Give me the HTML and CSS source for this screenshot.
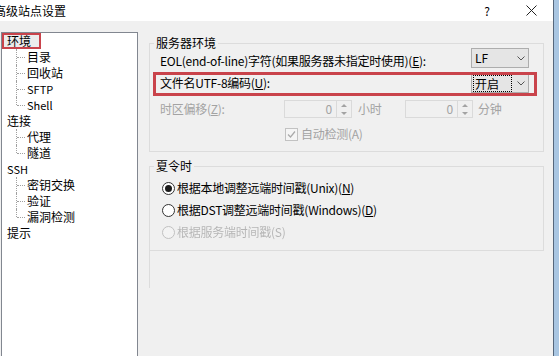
FILE: index.html
```html
<!DOCTYPE html>
<html lang="zh-CN">

<head>
    <meta charset="UTF-8">
    <title>高级站点设置</title>
    <link rel="stylesheet" href="styles.css">
</head>

<body>
    <div class="screen">
        <div class="dialog">
            <div class="titlebar">
                <span class="title">高级站点设置</span>
                <span class="help">?</span>
                <svg class="close" width="11" height="11" viewBox="0 0 11 11">
                    <path d="M0.5 0.5 L10.5 10.5 M10.5 0.5 L0.5 10.5" stroke="#222" stroke-width="1" fill="none" />
                </svg>
            </div>
            <div class="main">
                <ul class="tree">
                    <li>
                        <div class="node selected"><span class="mark">环境</span></div>
                        <ul class="sub">
                            <li>目录</li>
                            <li>回收站</li>
                            <li class="latin">SFTP</li>
                            <li class="latin">Shell</li>
                        </ul>
                    </li>
                    <li>
                        <div class="node">连接</div>
                        <ul class="sub">
                            <li>代理</li>
                            <li>隧道</li>
                        </ul>
                    </li>
                    <li>
                        <div class="node latin">SSH</div>
                        <ul class="sub">
                            <li>密钥交换</li>
                            <li>验证</li>
                            <li>漏洞检测</li>
                        </ul>
                    </li>
                    <li>
                        <div class="node">提示</div>
                    </li>
                </ul>
                <div class="pane">
                    <fieldset class="group">
                        <legend>服务器环境</legend>
                        <div class="group-body">
                            <div class="row row-eol">
                                <span class="label">EOL(end-of-line)字符(如果服务器未指定时使用)(<u>E</u>):</span>
                                <div class="combo">
                                    <span class="val">LF</span>
                                    <svg class="arrow" width="8" height="5" viewBox="0 0 8 5">
                                        <path d="M0.5 0.5 L4 4 L7.5 0.5" stroke="#555" fill="none" />
                                    </svg>
                                </div>
                            </div>
                            <div class="row row-utf">
                                <span class="label">文件名UTF-8编码(<u>U</u>):</span>
                                <div class="combo">
                                    <span class="val focus">开启</span>
                                    <svg class="arrow" width="8" height="5" viewBox="0 0 8 5">
                                        <path d="M0.5 0.5 L4 4 L7.5 0.5" stroke="#555" fill="none" />
                                    </svg>
                                </div>
                                <div class="redbox"></div>
                            </div>
                            <div class="row row-tz">
                                <span class="label off tz-label">时区偏移(<u>Z</u>):</span>
                                <div class="spin">
                                    <span class="spin-val">0</span>
                                    <span class="spin-btns"><i class="up"></i><i class="down"></i></span>
                                </div>
                                <span class="off unit-h">小时</span>
                                <div class="spin">
                                    <span class="spin-val">0</span>
                                    <span class="spin-btns"><i class="up"></i><i class="down"></i></span>
                                </div>
                                <span class="off unit-m">分钟</span>
                            </div>
                            <div class="row row-auto">
                                <span class="check">
                                    <svg width="11" height="11" viewBox="0 0 11 11">
                                        <path d="M2 5.5 L4.5 8 L9 2.5" stroke="#a9a9a9" stroke-width="1.2" fill="none" />
                                    </svg>
                                </span>
                                <span class="off">自动检测(A)</span>
                            </div>
                        </div>
                    </fieldset>
                    <fieldset class="group group-dst">
                        <legend>夏令时</legend>
                        <div class="group-body">
                            <div class="row radio-row">
                                <span class="radio on"></span>
                                <span>根据本地调整远端时间戳(Unix)(<u>N</u>)</span>
                            </div>
                            <div class="row radio-row">
                                <span class="radio"></span>
                                <span>根据DST调整远端时间戳(Windows)(<u>D</u>)</span>
                            </div>
                            <div class="row radio-row smudge">
                                <span class="radio"></span>
                                <span>根据服务端时间戳(S)</span>
                            </div>
                        </div>
                    </fieldset>
                    <div class="trail"></div>
                </div>
            </div>
        </div>
        <div class="edge"></div>
    </div>
</body>

</html>
```

FILE: styles.css
```css
* {
    margin: 0;
    padding: 0;
    box-sizing: border-box;
}

ul {
    list-style: none;
}

body {
    font-family: "Noto Sans CJK SC", "Liberation Sans", sans-serif;
    font-size: 12px;
    line-height: 16px;
    color: #000;
    background: #f0f0f0;
}

.screen {
    width: 559px;
    height: 356px;
    display: flex;
    overflow: hidden;
}

.dialog {
    width: 553px;
    display: flex;
    flex-direction: column;
    background: #f0f0f0;
}

.edge {
    width: 6px;
    border-left: 1px solid #56677c;
    background: #a9c6e2;
}

/* title bar */

.titlebar {
    height: 21px;
    display: flex;
    align-items: center;
    background: #fff;
}

.title {
    margin-left: -6px;
}

.help {
    margin-left: auto;
}

.close {
    margin-left: 36px;
    margin-right: 16px;
}

.main {
    flex: 1;
    display: flex;
}

/* tree */

.tree {
    width: 137px;
    margin: 11px 0 0 1px;
    border: 1px solid #828790;
    border-bottom: 0;
    background: #fff;
}

.tree li {
    line-height: 16px;
}

.node {
    height: 16px;
    padding-left: 5px;
}

.node.selected {
    padding-left: 0;
}

.mark {
    display: inline-block;
    height: 16px;
    line-height: 12px;
    padding: 0 8px 0 3px;
    border: 2px solid #c9434b;
    background: #ececec;
}

.latin {
    font-size: 11px;
}

.sub li {
    position: relative;
    height: 16px;
    padding-left: 25px;
}

.sub li::before {
    content: "";
    position: absolute;
    left: 14px;
    top: 0;
    bottom: 0;
    border-left: 1px dotted #a0a0a0;
}

.sub li:last-child::before {
    bottom: 8px;
}

.sub li::after {
    content: "";
    position: absolute;
    left: 15px;
    top: 8px;
    width: 8px;
    border-top: 1px dotted #a0a0a0;
}

/* right pane */

.pane {
    flex: 1;
    padding: 14px 9px 0 11px;
}

.group {
    border: 1px solid #dcdcdc;
    min-width: 0;
}

.group legend {
    margin-left: 4px;
    padding: 0 2px;
    line-height: 16px;
}

.group-body {
    padding: 0 14px 9px 10px;
    letter-spacing: -0.25px;
}

.row {
    display: flex;
    align-items: center;
}

.row-eol {
    height: 20px;
    margin-top: -3px;
}

.row-eol .label {
    margin-top: 5px;
}

.row-utf {
    position: relative;
    height: 20px;
    margin-top: 5px;
}

.redbox {
    position: absolute;
    left: -7px;
    right: -8px;
    top: -1px;
    bottom: -3px;
    border: 3px solid #c9434b;
}

.combo {
    width: 58px;
    height: 20px;
    margin-left: auto;
    display: flex;
    align-items: center;
    padding-left: 2px;
    border: 1px solid #adadad;
    background: #e5e5e5;
    letter-spacing: 0;
}

.combo .val {
    flex: 1;
    padding-left: 1px;
}

.combo .focus {
    flex: 0 0 auto;
    width: 37px;
    padding-left: 1px;
    outline: 1px dotted #000;
    line-height: 15px;
}

.combo .arrow {
    margin-left: auto;
    margin-right: 3px;
}

.off {
    color: #a3a3a3;
}

.row-tz {
    height: 18px;
    margin-top: 7px;
}

.tz-label {
    width: 124px;
}

.spin {
    width: 68px;
    height: 18px;
    display: flex;
    border: 1px solid #dadada;
}

.spin-val {
    flex: 1;
    text-align: right;
    padding-right: 4px;
    color: #a3a3a3;
}

.spin-btns {
    width: 15px;
    display: flex;
    flex-direction: column;
    border-left: 1px solid #dadada;
}

.spin-btns i {
    flex: 1;
    display: flex;
    align-items: center;
    justify-content: center;
}

.spin-btns i::after {
    content: "";
    border-left: 3px solid transparent;
    border-right: 3px solid transparent;
}

.spin-btns .up::after {
    border-bottom: 3px solid #a3a3a3;
}

.spin-btns .down::after {
    border-top: 3px solid #a3a3a3;
}

.unit-h {
    width: 53px;
    padding-left: 6px;
}

.unit-m {
    padding-left: 5px;
}

.row-auto {
    height: 16px;
    margin-top: 8px;
    padding-left: 125px;
}

.check {
    width: 13px;
    height: 13px;
    margin-right: 3px;
    display: flex;
    align-items: center;
    justify-content: center;
    border: 1px solid #c2c2c2;
    background: #f5f5f5;
}

/* daylight saving group */

.group-dst {
    margin-top: 6px;
}

.group-dst .group-body {
    padding: 6px 14px 10px 12px;
}

.radio-row {
    height: 16px;
    margin-bottom: 6px;
}

.radio-row:last-child {
    margin-bottom: 0;
}

.radio {
    width: 13px;
    height: 13px;
    margin-right: 2px;
    border-radius: 50%;
    border: 1px solid #333;
    background: #fff;
    display: flex;
    align-items: center;
    justify-content: center;
}

.radio.on::after {
    content: "";
    width: 7px;
    height: 7px;
    border-radius: 50%;
    background: #1a1a1a;
}

.smudge {
    opacity: 0.25;
    filter: blur(0.7px);
}

.trail {
    height: 37px;
    border-left: 1px solid #dcdcdc;
}
```
